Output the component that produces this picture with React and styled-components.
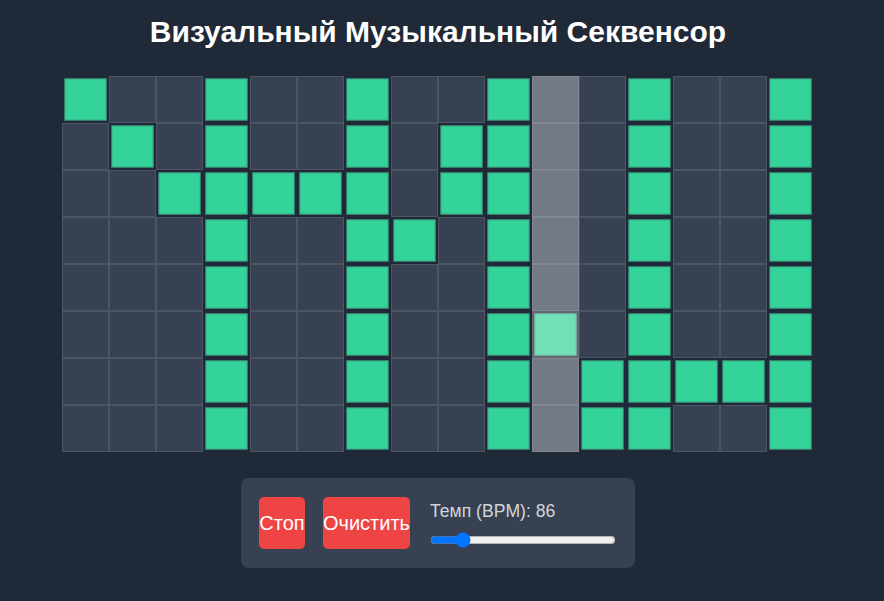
import React from "react";
import styled, { createGlobalStyle, css } from "styled-components";

const Global = createGlobalStyle`
  html, body { margin: 0; padding: 0; background: #1f2937; }
  body { font-family: "Liberation Sans", Arial, sans-serif; color: #fff; }
`;

const Page = styled.div`
  width: 876px;
  display: flex;
  flex-direction: column;
  align-items: center;
  padding-top: 13px;
`;

const Title = styled.h1`
  margin: 0 0 25px;
  font-size: 30px;
  font-weight: bold;
  color: #ffffff;
  line-height: 38px;
`;

const Grid = styled.div`
  display: grid;
  grid-template-columns: repeat(16, 47px);
  grid-auto-rows: 47px;
`;

const Slot = styled.div`
  position: relative;
  display: flex;
  ${(p) =>
    p.$playing &&
    css`
      &::after {
        content: "";
        position: absolute;
        inset: 0;
        background: rgba(255, 255, 255, 0.3);
        pointer-events: none;
      }
    `}
`;

const Cell = styled.div`
  flex: 1;
  box-sizing: border-box;
  border: 1px solid ${(p) => (p.$active ? "rgba(75, 85, 99, 0.6)" : "#4b5563")};
  background: ${(p) => (p.$active ? "#34d399" : "#374151")};
  transform: ${(p) => (p.$active ? "scale(0.9)" : "none")};
`;

const Controls = styled.div`
  margin-top: 26px;
  background: #374151;
  border-radius: 8px;
  padding: 19px 18px;
  display: flex;
  align-items: center;
  gap: 18px;
`;

const Button = styled.button`
  box-sizing: border-box;
  width: ${(p) => p.$w}px;
  height: 52px;
  padding: 0;
  border: none;
  border-radius: 5px;
  background: #ef4444;
  color: #ffffff;
  font-family: "Liberation Sans", Arial, sans-serif;
  font-size: 20px;
  white-space: nowrap;
  display: flex;
  align-items: center;
  justify-content: center;
`;

const TempoBox = styled.div`
  display: flex;
  flex-direction: column;
  margin: 4px 0 0 2px;
  width: 187px;
`;

const Label = styled.label`
  font-size: 17.6px;
  color: #d1d5db;
  line-height: 20px;
  margin-bottom: 5px;
`;

const Range = styled.input`
  width: 186px;
  margin: 6px 0 1px;
`;

const rows = [
  [0, 3, 6, 9, 12, 15],
  [1, 3, 6, 8, 9, 12, 15],
  [2, 3, 4, 5, 6, 8, 9, 12, 15],
  [3, 6, 7, 9, 12, 15],
  [3, 6, 9, 12, 15],
  [3, 6, 9, 10, 12, 15],
  [3, 6, 9, 11, 12, 13, 14, 15],
  [3, 6, 9, 11, 12, 15],
];

const PLAY = 10;

export default function App() {
  return (
    <>
      <Global />
      <Page>
        <Title>Визуальный Музыкальный Секвенсор</Title>
        <Grid>
          {rows.map((r, ri) =>
            Array.from({ length: 16 }, (_, ci) => (
              <Slot key={`${ri}-${ci}`} $playing={ci === PLAY}>
                <Cell $active={r.includes(ci)} />
              </Slot>
            ))
          )}
        </Grid>
        <Controls>
          <Button $w={46}>Стоп</Button>
          <Button $w={87}>Очистить</Button>
          <TempoBox>
            <Label>Темп (BPM): 86</Label>
            <Range type="range" min="60" max="240" defaultValue="86" readOnly />
          </TempoBox>
        </Controls>
      </Page>
    </>
  );
}
